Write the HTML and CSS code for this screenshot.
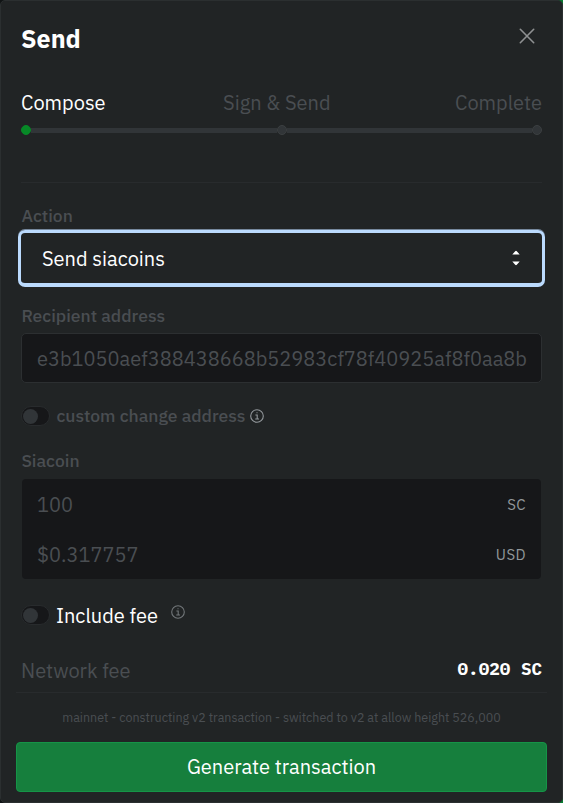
FILE: index.html
```
<!DOCTYPE html>
<html lang="en">
<head>
<meta charset="utf-8">
<title>Send</title>
<link rel="stylesheet" href="styles.css">
</head>
<body>
<main class="dialog">
  <header class="header">
    <h1 class="title">Send</h1>
    <button class="close" aria-label="Close"><svg width="16" height="16" viewBox="0 0 16 16"><path d="M1.3 1.3 14.7 14.7M14.7 1.3 1.3 14.7" fill="none" stroke="#8f9192" stroke-width="1.6" stroke-linecap="round"/></svg></button>
  </header>
  <div class="steps"><span class="step active">Compose</span><span class="step sign">Sign &amp; Send</span><span class="step complete">Complete</span></div>
  <div class="track"><i class="dot on"></i><i class="line"></i><i class="dot"></i><i class="line"></i><i class="dot"></i></div>
  <hr class="rule">
  <div class="label action">Action</div>
  <div class="select"><span class="selected">Send siacoins</span><svg width="8" height="16" viewBox="0 0 8 16"><path d="M.3 4.5 3.2 1.2Q4 .5 4.8 1.2L7.7 4.5ZM.3 11.5H7.7L4.8 14.8Q4 15.5 3.2 14.8Z" fill="#fff"/></svg></div>
  <div class="label recipient">Recipient address</div>
  <div class="field"><span class="address">e3b1050aef388438668b52983cf78f40925af8f0aa8b</span></div>
  <div class="toggle-row"><i class="switch"></i><span class="label custom">custom change address</span><svg class="info" width="14" height="14" viewBox="0 0 14 14"><circle cx="7" cy="7" r="6.3"/><path d="M5.4 6H7.2V10M5.2 10H9M6.5 3.8H7.5"/></svg></div>
  <div class="label siacoin">Siacoin</div>
  <div class="amounts">
    <div class="amount"><span class="hundred">100</span><span class="unit">SC</span></div>
    <div class="amount"><span class="dollars">$0.317757</span><span class="unit">USD</span></div>
  </div>
  <div class="toggle-row include"><i class="switch"></i><span class="include-text">Include fee</span><svg class="info raised" width="14" height="14" viewBox="0 0 14 14"><circle cx="7" cy="7" r="6.3"/><path d="M5.4 6H7.2V10M5.2 10H9M6.5 3.8H7.5"/></svg></div>
  <div class="fee"><span class="fee-name">Network fee</span><span class="fee-value">0.020 SC</span></div>
  <footer class="footer">
    <div class="note"><span>mainnet - constructing v2 transaction - switched to v2 at allow height 526,000</span></div>
    <button class="generate">Generate transaction</button>
  </footer>
</main>
</body>
</html>
```
FILE: styles.css
```
* { box-sizing: border-box; }
html { background: linear-gradient(90deg, #101314 0 50%, #087b31 50%); }
body { margin: 0; font-family: "IBM Plex Sans", Roboto, "Liberation Sans", sans-serif; color: #4a4e52; font-size: 20px; }
button { font: inherit; border: 0; padding: 0; background: none; }
.dialog { width: 563px; height: 803px; border: 1px solid #2b2f30; border-radius: 5px; background: #212425; padding: 0 20px; display: flex; flex-direction: column; overflow: hidden; white-space: nowrap; }
.header { height: 76px; display: flex; justify-content: space-between; padding: 22px 7px 0 0; }
.title { margin: 0; color: #fff; font-size: 25px; line-height: 32px; font-weight: 700; }
.close { height: 16px; display: flex; margin-top: 5px; }
.steps { height: 48px; display: flex; justify-content: space-between; line-height: 52px; }
.active { color: #fff; }
.sign { margin-left: -7px; }
.track { height: 10px; display: flex; align-items: center; }
.line { height: 5px; flex: 1; background: #313538; }
.dot { width: 10px; height: 10px; border-radius: 50%; background: #313538; border: 1px solid #3b3f41; }
.dot.on { background: #078927; border-color: #078927; }
.rule { width: 100%; border: 0; border-top: 1px solid #282b2d; margin: 47px 0 22px; flex: none; }
.label { font-weight: 500; font-size: 17.5px; line-height: 22px; padding-left: .4px; }
.select { margin: 3px -3px 0; height: 57px; border: solid #bbdafd; border-width: 3px 3px 4px; border-radius: 7px; box-shadow: 0 -1px 0 #76889d; padding: 0 22px 0 21px; display: flex; align-items: center; justify-content: space-between; flex: none; }
.selected { color: #fff; }
.recipient { margin-top: 18px; }
.field { margin-top: 6px; height: 50px; border: 1px solid #2c2f31; border-radius: 5px; background: #161719; padding: 0 15px; line-height: 49px; flex: none; }
.toggle-row { margin-top: 23px; height: 20px; display: flex; align-items: center; flex: none; }
.switch { width: 29px; height: 20px; border: 1px solid #282b2d; border-radius: 10px; background: #161719; margin-right: 6px; display: flex; align-items: center; padding-left: 1px; }
.switch::before { content: ""; width: 15px; height: 15px; border-radius: 50%; background: #313538; }
.info { margin-left: 5px; fill: none; stroke: #92979b; stroke-width: 1.1; }
.siacoin { margin-top: 24px; }
.amounts { margin: 7px 1px 0; height: 100px; border-radius: 4px; background: #161719; padding: 0 15px; flex: none; }
.amount { height: 50px; display: flex; justify-content: space-between; align-items: center; padding-top: 1px; }
.unit { font-size: 15px; color: #92979b; font-weight: 400; letter-spacing: .4px; }
.include { margin-top: 26px; }
.include-text { color: #fff; }
.info.raised { margin: -7px 0 0 13px; stroke: #72777a; }
.fee { margin-top: 31px; height: 36px; display: flex; justify-content: space-between; line-height: 30px; flex: none; }
.fee-value { color: #fff; font-family: "IBM Plex Mono", "Liberation Mono", monospace; font-size: 17.6px; line-height: 26px; font-weight: 700; }
.footer { margin: 0 -5px; border-top: 1px solid #282b2d; }
.note { height: 49px; line-height: 49px; text-align: center; font-size: 12.5px; }
.generate { width: 100%; height: 50px; border: 1px solid #159447; border-radius: 4px; color: #fff; background: #167f3d; padding-bottom: 1px; }
```
